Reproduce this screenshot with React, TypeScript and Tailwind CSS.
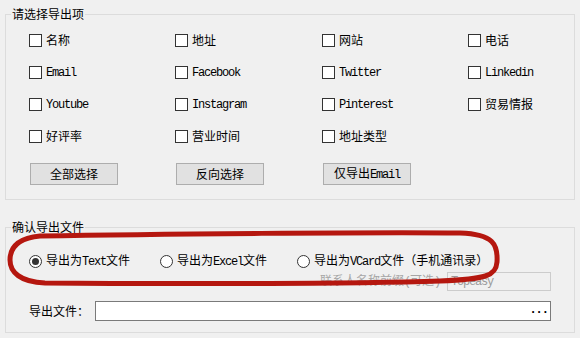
import React from "react";

// split a label into latin (SimSun-like mono) and CJK runs
function Label({ text, className = "" }: { text: string; className?: string }) {
  const parts = text.match(/[\x20-\x7e]+|[^\x20-\x7e]+/g) || [];
  return (
    <span className={`whitespace-nowrap ${className}`}>
      {parts.map((p, i) =>
        /^[\x20-\x7e]+$/.test(p) ? (
          <span key={i} className="font-['Liberation_Mono',monospace] text-[12px] tracking-[-1.2px]">
            {p}
          </span>
        ) : (
          <span key={i}>{p}</span>
        )
      )}
    </span>
  );
}

function Check({ label }: { label: string }) {
  return (
    <div className="flex items-center gap-[4px] h-[32px]">
      <span className="w-[13px] h-[13px] border border-[#333333] bg-white shrink-0" />
      <Label text={label} />
    </div>
  );
}

function Radio({ label, checked = false }: { label: string; checked?: boolean }) {
  return (
    <div className="flex items-center gap-[4px]">
      <span className="w-[13px] h-[13px] rounded-full border border-[#333333] bg-white flex items-center justify-center shrink-0">
        {checked && <span className="w-[7px] h-[7px] rounded-full bg-[#333333]" />}
      </span>
      <Label text={label} />
    </div>
  );
}

function Btn({ label }: { label: string }) {
  return (
    <button className="ml-[1px] w-[88px] h-[22px] border border-[#adadad] bg-[#e1e1e1] flex items-center justify-center text-[12px]">
      <Label text={label} />
    </button>
  );
}

const items = [
  "名称", "地址", "网站", "电话",
  "Email", "Facebook", "Twitter", "Linkedin",
  "Youtube", "Instagram", "Pinterest", "贸易情报",
  "好评率", "营业时间", "地址类型",
];

export default function App() {
  return (
    <div className="relative w-[580px] h-[338px] overflow-hidden bg-[#f0f0f0] px-[5px] pt-[6px] text-[12px] leading-[16px] text-black font-['Noto_Sans_CJK_SC',sans-serif]">
      <fieldset className="border border-[#dcdcdc]">
        <legend className="ml-[5px] px-[1px] leading-[16px]">请选择导出项</legend>
        <div className="pl-[23px] pt-[2px] pb-[14px]">
          <div className="grid grid-cols-[146px_147px_146px_1fr]">
            {items.map((it) => (
              <Check key={it} label={it} />
            ))}
          </div>
          <div className="grid grid-cols-[146px_147px_146px_1fr] mt-[11px]">
            <Btn label="全部选择" />
            <Btn label="反向选择" />
            <Btn label="仅导出Email" />
          </div>
        </div>
      </fieldset>

      <fieldset className="mt-[19px] border border-[#dcdcdc]">
        <legend className="ml-[5px] px-[1px] leading-[16px]">确认导出文件</legend>
        <div className="pl-[23px] pr-[23px] pt-[16px] pb-[11px]">
          <div className="flex items-center h-[20px] gap-[30px]">
            <Radio label="导出为Text文件" checked />
            <Radio label="导出为Excel文件" />
            <Radio label="导出为VCard文件（手机通讯录）" />
          </div>
          <div className="flex items-center justify-end gap-[7px] h-[20px]">
            <Label text="联系人名称前缀(可选)" className="text-[#a6a6a6]" />
            <div className="w-[104px] h-[19px] border border-[#cccccc] bg-[#f0f0f0] flex items-center pl-[3px] text-[#9a9a9a]">
              <Label text="Topeasy" />
            </div>
          </div>
          <div className="flex items-center gap-[6px] mt-[10px]">
            <Label text="导出文件：" />
            <div className="flex-1 h-[20px] border border-[#7a7a7a] bg-white flex items-center justify-end pr-[2px]">
              <span className="font-['Liberation_Mono',monospace] font-bold text-[12px] tracking-[-1px] pb-[2px]">...</span>
            </div>
          </div>
        </div>
      </fieldset>

      <svg className="absolute left-0 top-0 pointer-events-none" width="580" height="338" viewBox="0 0 580 338">
        <path
          d="M40 236 C150 234 380 232 460 233 C494 234 498 245 497 262 C496 276 486 279 440 281 C350 284 150 284 45 283 C20 282 10 272 10 260 C10 246 20 238 40 236 Z"
          fill="none"
          stroke="#b5170f"
          strokeWidth="5"
        />
      </svg>
    </div>
  );
}
